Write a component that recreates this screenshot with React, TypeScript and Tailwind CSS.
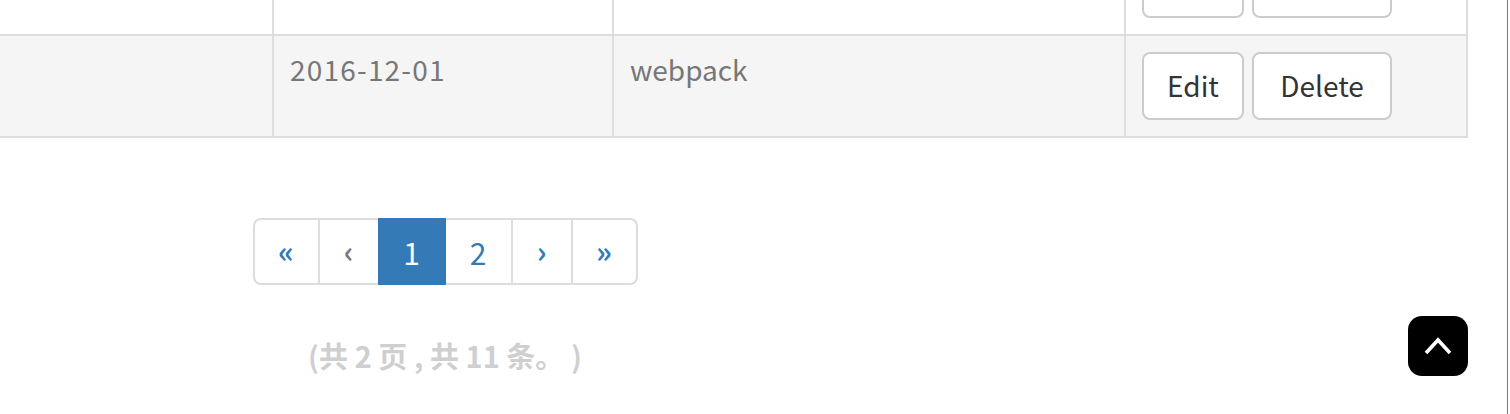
const font = { fontFamily: '"Noto Sans CJK SC", "Noto Sans", sans-serif' };

type Row = { date: string; name: string; actions: boolean };

// the first row is scrolled almost out of view: only the bottom of its buttons shows
const rows: Row[] = [
  { date: "", name: "", actions: false },
  { date: "2016-12-01", name: "webpack", actions: true },
];

function TableRow({ row, striped }: { row: Row; striped?: boolean }) {
  return (
    <div className={`flex h-[102px] border-b-2 border-[#ddd] ${striped ? "bg-[#f5f5f5]" : "bg-white"}`}>
      <div className="w-[274px] shrink-0 border-r-2 border-[#ddd]" />
      <div className="w-[340px] shrink-0 border-r-2 border-[#ddd] px-[16px] pt-[13px] text-[28px] leading-[40px] tracking-[1.2px] text-[#777]">
        {row.date}
      </div>
      <div className="w-[512px] shrink-0 border-r-2 border-[#ddd] px-[16px] pt-[13px] text-[28px] leading-[40px] text-[#777]">
        {row.name}
      </div>
      <div className="w-[342px] shrink-0 border-r-2 border-[#ddd] p-[16px] flex gap-[8px]">
        <button className="w-[102px] h-[68px] pb-[3px] bg-white border-2 border-[#ccc] rounded-[8px] text-[28px] text-[#333]">
          {row.actions ? "Edit" : ""}
        </button>
        <button className="w-[140px] h-[68px] pb-[3px] bg-white border-2 border-[#ccc] rounded-[8px] text-[28px] text-[#333]">
          {row.actions ? "Delete" : ""}
        </button>
      </div>
    </div>
  );
}

export default function App() {
  return (
    <div className="relative flex h-[414px] w-full overflow-hidden bg-white" style={font}>
      <div className="w-[1507px] shrink-0">
        <div className="w-[1468px]">
          <div className="h-[36px] overflow-hidden flex flex-col justify-end">
            <TableRow row={rows[0]} />
          </div>
          <TableRow row={rows[1]} striped />
        </div>

        <div className="w-[890px] flex flex-col items-center pt-[80px]">
          <div className="flex h-[67px] text-[30px] leading-[40px]">
            <a className="w-[67px] pb-[4px] flex items-center justify-center border-2 border-[#ddd] rounded-l-[8px] font-bold text-[#337ab7]">
              «
            </a>
            <span className="w-[58px] pb-[4px] flex items-center justify-center border-y-2 border-[#ddd] font-bold text-[#777]">
              ‹
            </span>
            <span className="w-[68px] flex items-center justify-center bg-[#337ab7] text-white">1</span>
            <a className="w-[67px] flex items-center justify-center border-y-2 border-r-2 border-[#ddd] text-[#337ab7]">
              2
            </a>
            <a className="w-[60px] pb-[4px] flex items-center justify-center border-y-2 border-r-2 border-[#ddd] font-bold text-[#337ab7]">
              ›
            </a>
            <a className="w-[65px] pb-[4px] flex items-center justify-center border-y-2 border-r-2 border-[#ddd] rounded-r-[8px] font-bold text-[#337ab7]">
              »
            </a>
          </div>
          <p className="mt-[50px] text-[29px] leading-[40px] font-bold text-[#cfcfcf]">
            (共 2 页 , 共 11 条。 )
          </p>
        </div>
      </div>
      <div className="w-px shrink-0 bg-[#7a7a7a]" />

      <button className="absolute left-[1408px] top-[316px] w-[60px] h-[60px] rounded-[14px] bg-black flex items-center justify-center">
        <svg width="30" height="20" viewBox="0 0 30 20" fill="none">
          <path d="M3 17 L15 4 L27 17" stroke="white" strokeWidth="3.6" />
        </svg>
      </button>
    </div>
  );
}
